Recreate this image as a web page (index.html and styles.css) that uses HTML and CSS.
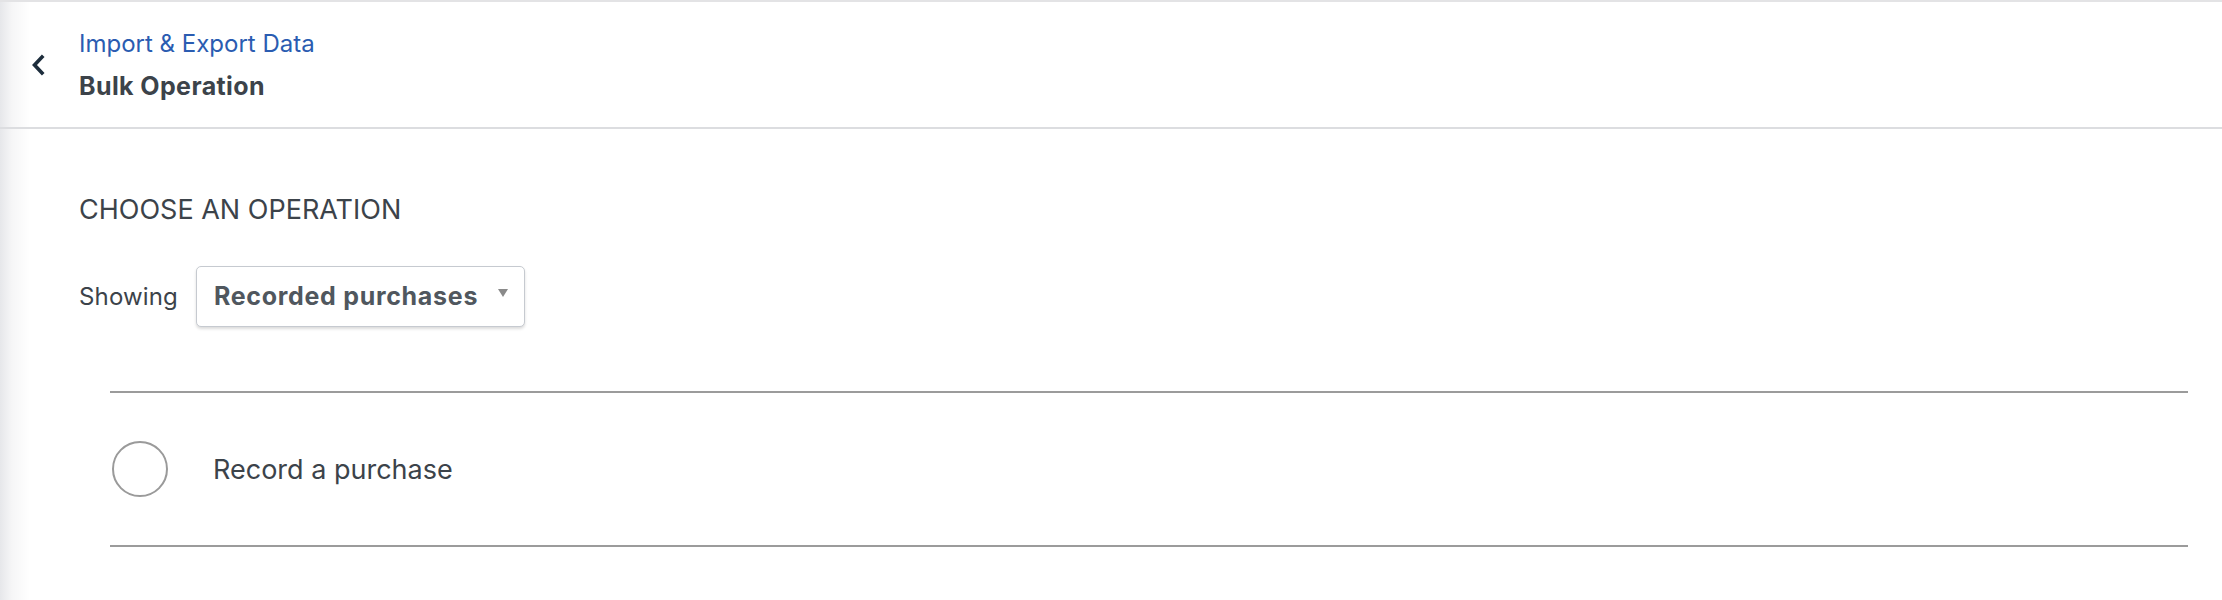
FILE: index.html
```html
<!DOCTYPE html>
<html lang="en">
  <head>
    <meta charset="UTF-8" />
    <meta name="viewport" content="width=device-width, initial-scale=1.0" />
    <title>Bulk Operation</title>
    <link rel="stylesheet" href="styles.css">
  </head>
  <body>
    <div class="page">
      <header class="topbar">
        <a class="back" href="#" aria-label="Back">
          <svg width="14" height="22" viewBox="0 0 14 22">
            <polyline points="11,3 3.5,11 11,19" fill="none" stroke="#1d2d3c" stroke-width="3.6" stroke-linecap="square" />
          </svg>
        </a>
        <div class="titles">
          <a class="crumb" href="#">Import &amp; Export Data</a>
          <div class="title">Bulk Operation</div>
        </div>
      </header>

      <main class="content">
        <h2 class="section-title">CHOOSE AN OPERATION</h2>

        <div class="filter">
          <span class="filter-label">Showing</span>
          <div class="select">
            <span>Recorded purchases</span>
            <svg class="caret" width="10" height="8" viewBox="0 0 10 8">
              <polygon points="0,0 10,0 5,8" fill="#8a8a8a" />
            </svg>
          </div>
        </div>

        <ul class="operations">
          <li class="operation">
            <span class="radio"></span>
            <span class="operation-name">Record a purchase</span>
          </li>
        </ul>
      </main>
    </div>
  </body>
</html>
```

FILE: styles.css
```css
body {
  margin: 0;
  background: #fff;
  color: #3c434a;
  font-family: Inter, "Noto Sans", sans-serif;
}

.page {
  min-height: 600px;
  border-top: 2px solid #e3e3e5;
  background: linear-gradient(to right, #e6e7ea 0, #f6f6f7 12px, #fff 30px);
}

/* header */
.topbar {
  display: flex;
  align-items: center;
  height: 125px;
  border-bottom: 2px solid #dcdde0;
}

.back {
  display: flex;
  width: 14px;
  margin-left: 31px;
  margin-right: 34px;
}

.titles {
  display: flex;
  flex-direction: column;
  font-size: 24px;
  line-height: 42px;
}

.crumb {
  color: #2a5cb1;
  text-decoration: none;
}

.title {
  font-size: 25px;
  font-weight: 700;
  letter-spacing: 0.4px;
  color: #3c434a;
}

/* content */
.content {
  padding: 65px 34px 0 79px;
}

.section-title {
  margin: 0;
  font-size: 27px;
  font-weight: 400;
  line-height: 32px;
  color: #3c434a;
}

.filter {
  display: flex;
  align-items: center;
  gap: 18px;
  margin-top: 40px;
}

.filter-label {
  font-size: 24px;
  letter-spacing: 0.15px;
}

.select {
  display: flex;
  align-items: flex-start;
  gap: 20px;
  box-sizing: border-box;
  height: 61px;
  padding: 15px 16px 0 17px;
  border: 1px solid #c6cad0;
  border-radius: 5px;
  background: #fff;
  box-shadow: 0 2px 3px rgba(0, 0, 0, 0.14);
  font-size: 25px;
  font-weight: 700;
  letter-spacing: 0.7px;
  line-height: 29px;
  color: #50575e;
}

.caret {
  margin-top: 7px;
}

.operations {
  list-style: none;
  margin: 64px 0 0 31px;
  padding: 0;
  border-top: 2px solid #9b9b9b;
  border-bottom: 2px solid #9b9b9b;
}

.operation {
  display: flex;
  align-items: center;
  height: 152px;
}

.radio {
  box-sizing: border-box;
  width: 56px;
  height: 56px;
  margin-left: 2px;
  border: 2px solid #9a9a9a;
  border-radius: 50%;
}

.operation-name {
  margin-left: 45px;
  font-size: 27px;
  color: #3c434a;
}
```
